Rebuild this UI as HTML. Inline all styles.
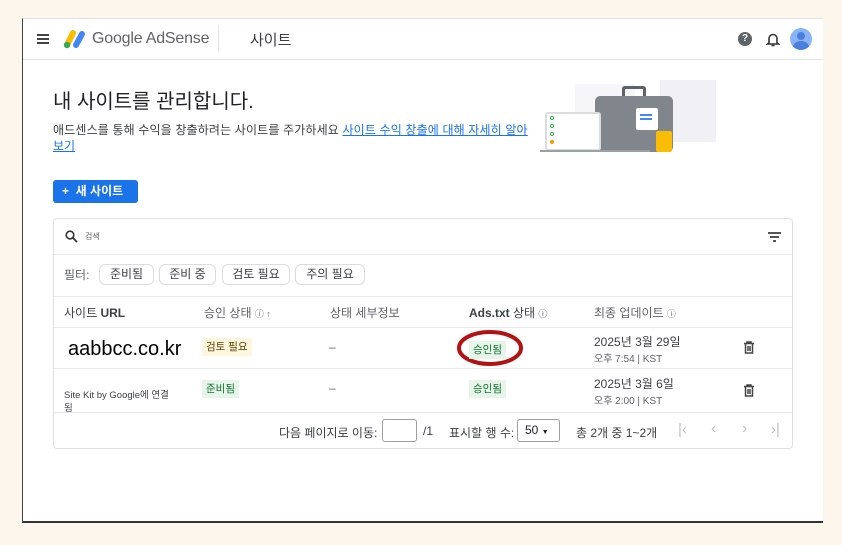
<!DOCTYPE html>
<html><head><meta charset="utf-8"><style>
*{box-sizing:border-box;margin:0;padding:0}
body{width:842px;height:545px;background:#fcf6ec;font-family:"Liberation Sans","Noto Sans CJK KR",sans-serif;color:#202124;position:relative;overflow:hidden}
.abs{position:absolute}
.panel{left:22px;top:18px;width:801px;height:505px;background:#fff;border-left:1px solid #444;border-bottom:2px solid #333;border-top:1px solid #e3e3e3}
.t{position:absolute;white-space:nowrap}
.chip{position:absolute;top:264px;height:21px;border:1px solid #dadce0;border-radius:6px;font-size:12px;color:#3c4043;text-align:center;line-height:19px}
.hl{position:absolute;left:54px;width:738px;height:1px;background:#e8eaed}
.badge{position:absolute;height:18px;font-size:10.5px;line-height:18px;padding:0 4px}
</style></head><body>
<div class="abs panel"></div>
<div class="abs" style="left:23px;top:59px;width:800px;height:1px;background:#e3e3e3"></div>
<div class="abs" style="left:37px;top:34px;width:12px;height:2px;background:#444;box-shadow:0 4px 0 #444,0 8px 0 #444"></div>
<svg class="abs" style="left:63px;top:28px" width="24" height="22" viewBox="0 0 24 22"><line x1="4" y1="17" x2="10" y2="5" stroke="#fbbc04" stroke-width="6" stroke-linecap="round"/><line x1="13" y1="17" x2="19" y2="6" stroke="#4285f4" stroke-width="6" stroke-linecap="round"/><circle cx="4" cy="17" r="3.2" fill="#34a853"/></svg>
<div class="t" style="left:92px;top:30px;font-size:16px;color:#5f6368;letter-spacing:-0.2px">Google AdSense</div>
<div class="abs" style="left:218px;top:25px;width:1px;height:26px;background:#e3e3e3"></div>
<div class="t" style="left:250px;top:29px;font-size:15px;color:#3c4043">사이트</div>
<div class="abs" style="left:738px;top:32px;width:14px;height:14px;border-radius:50%;background:#5f6368;color:#fff;font-size:10px;font-weight:bold;text-align:center;line-height:14px">?</div>
<svg class="abs" style="left:766px;top:32px" width="14" height="15" viewBox="0 0 14 15"><path d="M3 11V6.5a4 4 0 0 1 8 0V11l1.5 1H1.5z" fill="none" stroke="#333" stroke-width="1.6"/><path d="M5.5 13.5h3" stroke="#333" stroke-width="1.5"/></svg>
<div class="abs" style="left:790px;top:28px;width:22px;height:22px;border-radius:50%;background:#8ab4f8;overflow:hidden"><div class="abs" style="left:7px;top:4px;width:8px;height:8px;border-radius:50%;background:#4a7fe0"></div><div class="abs" style="left:3px;top:13px;width:16px;height:12px;border-radius:50%;background:#4a7fe0"></div></div>
<div class="t" style="left:53px;top:85px;font-size:20px;color:#202124">내 사이트를 관리합니다.</div>
<div class="t" style="left:53px;top:121px;font-size:12px;color:#3c4043;letter-spacing:0.15px">애드센스를 통해 수익을 창출하려는 사이트를 주가하세요 <span style="color:#1a73e8;text-decoration:underline">사이트 수익 창출에 대해 자세히 알아</span></div>
<div class="t" style="left:53px;top:137px;font-size:12px;color:#1a73e8;text-decoration:underline">보기</div>
<div class="abs" style="left:53px;top:180px;width:85px;height:23px;background:#1a73e8;border-radius:3px;color:#fff;font-size:12px;font-weight:bold;line-height:23px;padding-left:9px">+&nbsp;&nbsp;새 사이트</div>
<div class="abs" style="left:660px;top:80px;width:56px;height:62px;background:#f1f1f5"></div>
<div class="abs" style="left:575px;top:84px;width:60px;height:62px;background:#f6f6f9"></div>
<div class="abs" style="left:622px;top:86px;width:24px;height:12px;border:3px solid #5f6368;border-bottom:none;border-radius:3px 3px 0 0"></div>
<div class="abs" style="left:595px;top:96px;width:78px;height:56px;background:#80868b;border-radius:5px"></div>
<div class="abs" style="left:636px;top:108px;width:22px;height:22px;background:#fff;border-radius:2px"></div>
<div class="abs" style="left:640px;top:114px;width:12px;height:2px;background:#4285f4;box-shadow:0 4px 0 #4285f4"></div>
<div class="abs" style="left:656px;top:131px;width:16px;height:21px;background:#fbbc04;border-radius:2px"></div>
<div class="abs" style="left:545px;top:112px;width:56px;height:39px;background:#fff;border:2px solid #dadce0;border-radius:3px"></div>
<div class="abs" style="left:550px;top:116px;width:4px;height:4px;border:1px solid #34a853;border-radius:50%"></div>
<div class="abs" style="left:550px;top:124px;width:4px;height:4px;border:1px solid #34a853;border-radius:50%"></div>
<div class="abs" style="left:550px;top:132px;width:4px;height:4px;border:1px solid #34a853;border-radius:50%"></div>
<div class="abs" style="left:550px;top:140px;width:4px;height:4px;background:#f29900;border-radius:50%"></div>
<div class="abs" style="left:540px;top:150px;width:110px;height:2px;background:#9aa0a6"></div>
<div class="abs" style="left:53px;top:218px;width:740px;height:231px;border:1px solid #e0e0e0;border-radius:4px"></div>
<svg class="abs" style="left:65px;top:230px" width="13" height="13" viewBox="0 0 13 13"><circle cx="5" cy="5" r="3.8" fill="none" stroke="#333" stroke-width="1.6"/><line x1="8" y1="8" x2="12" y2="12" stroke="#333" stroke-width="1.8"/></svg>
<div class="t" style="left:85px;top:231px;font-size:8px;color:#5f6368">검색</div>
<div class="abs" style="left:768px;top:232px;width:13px;height:1.5px;background:#555"></div>
<div class="abs" style="left:770px;top:236px;width:9px;height:1.5px;background:#555"></div>
<div class="abs" style="left:773px;top:240px;width:3px;height:1.5px;background:#555"></div>
<div class="hl" style="top:254px"></div>
<div class="t" style="left:64px;top:266px;font-size:12px;color:#5f6368">필터:</div>
<div class="chip" style="left:99px;width:55px">준비됨</div>
<div class="chip" style="left:159px;width:57px">준비 중</div>
<div class="chip" style="left:222px;width:68px">검토 필요</div>
<div class="chip" style="left:295px;width:70px">주의 필요</div>
<div class="hl" style="top:296px"></div>
<div class="t" style="left:64px;top:304px;font-size:12px;color:#3c4043">사이트 <b>URL</b></div>
<div class="t" style="left:204px;top:304px;font-size:12px;color:#5f6368">승인 상태 <span style="font-size:9px">ⓘ ↑</span></div>
<div class="t" style="left:330px;top:304px;font-size:12px;color:#5f6368">상태 세부정보</div>
<div class="t" style="left:469px;top:304px;font-size:12px;color:#3c4043"><b>Ads.txt</b> 상태 <span style="font-size:9px">ⓘ</span></div>
<div class="t" style="left:594px;top:304px;font-size:12px;color:#5f6368">최종 업데이트 <span style="font-size:9px">ⓘ</span></div>
<div class="hl" style="top:327px"></div>
<div class="t" style="left:68px;top:338px;font-size:20px;color:#000">aabbcc.co.kr</div>
<div class="badge" style="left:202px;top:338px;background:#fef7e0;color:#5f4300">검토 필요</div>
<div class="t" style="left:329px;top:340px;font-size:12px;color:#5f6368">–</div>
<svg class="abs" style="left:457px;top:328px" width="70" height="40"><ellipse cx="33" cy="20" rx="31" ry="16" fill="none" stroke="#b21212" stroke-width="4"/></svg>
<div class="badge" style="left:469px;top:341px;background:#e6f4ea;color:#137333">승인됨</div>
<div class="t" style="left:594px;top:333px;font-size:12px;color:#3c4043">2025년 3월 29일</div>
<div class="t" style="left:594px;top:350px;font-size:10px;color:#5f6368">오후 7:54 | KST</div>
<svg class="abs" style="left:743px;top:341px" width="12" height="13" viewBox="0 0 12 13"><path d="M1 2.5h10M4 2.5V1h4v1.5M2.5 3v9h7V3M5 5v5M7 5v5" fill="none" stroke="#444" stroke-width="1.5"/></svg>
<div class="hl" style="top:368px"></div>
<div class="t" style="left:64px;top:387px;font-size:9.5px;color:#3c4043">Site Kit by Google에 연결</div>
<div class="t" style="left:64px;top:400px;font-size:9.5px;color:#3c4043">됨</div>
<div class="badge" style="left:202px;top:380px;background:#e6f4ea;color:#137333">준비됨</div>
<div class="t" style="left:329px;top:381px;font-size:12px;color:#5f6368">–</div>
<div class="badge" style="left:469px;top:380px;background:#e6f4ea;color:#137333">승인됨</div>
<div class="t" style="left:594px;top:375px;font-size:12px;color:#3c4043">2025년 3월 6일</div>
<div class="t" style="left:594px;top:392px;font-size:10px;color:#5f6368">오후 2:00 | KST</div>
<svg class="abs" style="left:743px;top:384px" width="12" height="13" viewBox="0 0 12 13"><path d="M1 2.5h10M4 2.5V1h4v1.5M2.5 3v9h7V3M5 5v5M7 5v5" fill="none" stroke="#444" stroke-width="1.5"/></svg>
<div class="hl" style="top:412px"></div>
<div class="t" style="left:279px;top:424px;font-size:12px;color:#3c4043">다음 페이지로 이동:</div>
<div class="abs" style="left:382px;top:419px;width:35px;height:23px;border:1px solid #9aa0a6;border-radius:3px"></div>
<div class="t" style="left:423px;top:424px;font-size:12px;color:#3c4043">/1</div>
<div class="t" style="left:449px;top:424px;font-size:12px;color:#3c4043">표시할 행 수:</div>
<div class="abs" style="left:517px;top:419px;width:43px;height:23px;border:1px solid #9aa0a6;border-radius:3px;font-size:12px;line-height:21px;padding-left:7px">50 <span style="font-size:7px">▼</span></div>
<div class="t" style="left:576px;top:424px;font-size:12px;color:#3c4043">총 2개 중 1~2개</div>
<div class="t" style="left:678px;top:421px;font-size:15px;color:#bdc1c6">|‹</div>
<div class="t" style="left:711px;top:420px;font-size:16px;color:#bdc1c6">‹</div>
<div class="t" style="left:742px;top:420px;font-size:16px;color:#bdc1c6">›</div>
<div class="t" style="left:771px;top:421px;font-size:15px;color:#bdc1c6">›|</div>
</body></html>
